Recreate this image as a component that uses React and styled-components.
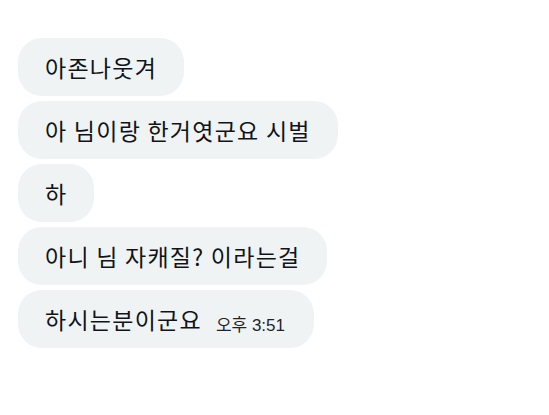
import React from 'react';
import styled, { createGlobalStyle } from 'styled-components';

const GlobalStyle = createGlobalStyle`
  body {
    margin: 0;
    background: #ffffff;
    font-family: "Noto Sans CJK KR", "Noto Sans", sans-serif;
  }
`;

const messages = [
  { text: '아존나웃겨' },
  { text: '아 님이랑 한거엿군요 시벌' },
  { text: '하' },
  { text: '아니 님 자캐질? 이라는걸' },
  { text: '하시는분이군요', time: '오후 3:51' },
];

const App = () => {
  return (
    <Page>
      <GlobalStyle />
      <Thread>
        {messages.map((m, i) => (
          <Bubble key={i}>
            <MessageText>{m.text}</MessageText>
            {m.time && <Time>{m.time}</Time>}
          </Bubble>
        ))}
      </Thread>
    </Page>
  );
};
export default App;

const Page = styled.div`
  width: 549px;
  height: 415px;
  background: #ffffff;
  padding: 38px 0 0 18px;
  box-sizing: border-box;
`;
const Thread = styled.div`
  display: flex;
  flex-direction: column;
  align-items: flex-start;
  gap: 5px;
`;
const Bubble = styled.div`
  display: flex;
  align-items: baseline;
  background-color: #eff3f4;
  border-radius: 24px;
  padding: 14px 27px;
  height: 58px;
  box-sizing: border-box;
  color: #0f1419;
`;
const MessageText = styled.span`
  font-size: 23px;
  letter-spacing: 1.25px;
  line-height: 30px;
  white-space: nowrap;
`;
export const Time = styled.span`
  font-family: "Liberation Sans", "Noto Sans CJK KR", sans-serif;
  font-size: 17px;
  margin: 0 2px 0 14px;
  color: #1f2328;
  white-space: nowrap;
  transform: translateY(2px);
`;
